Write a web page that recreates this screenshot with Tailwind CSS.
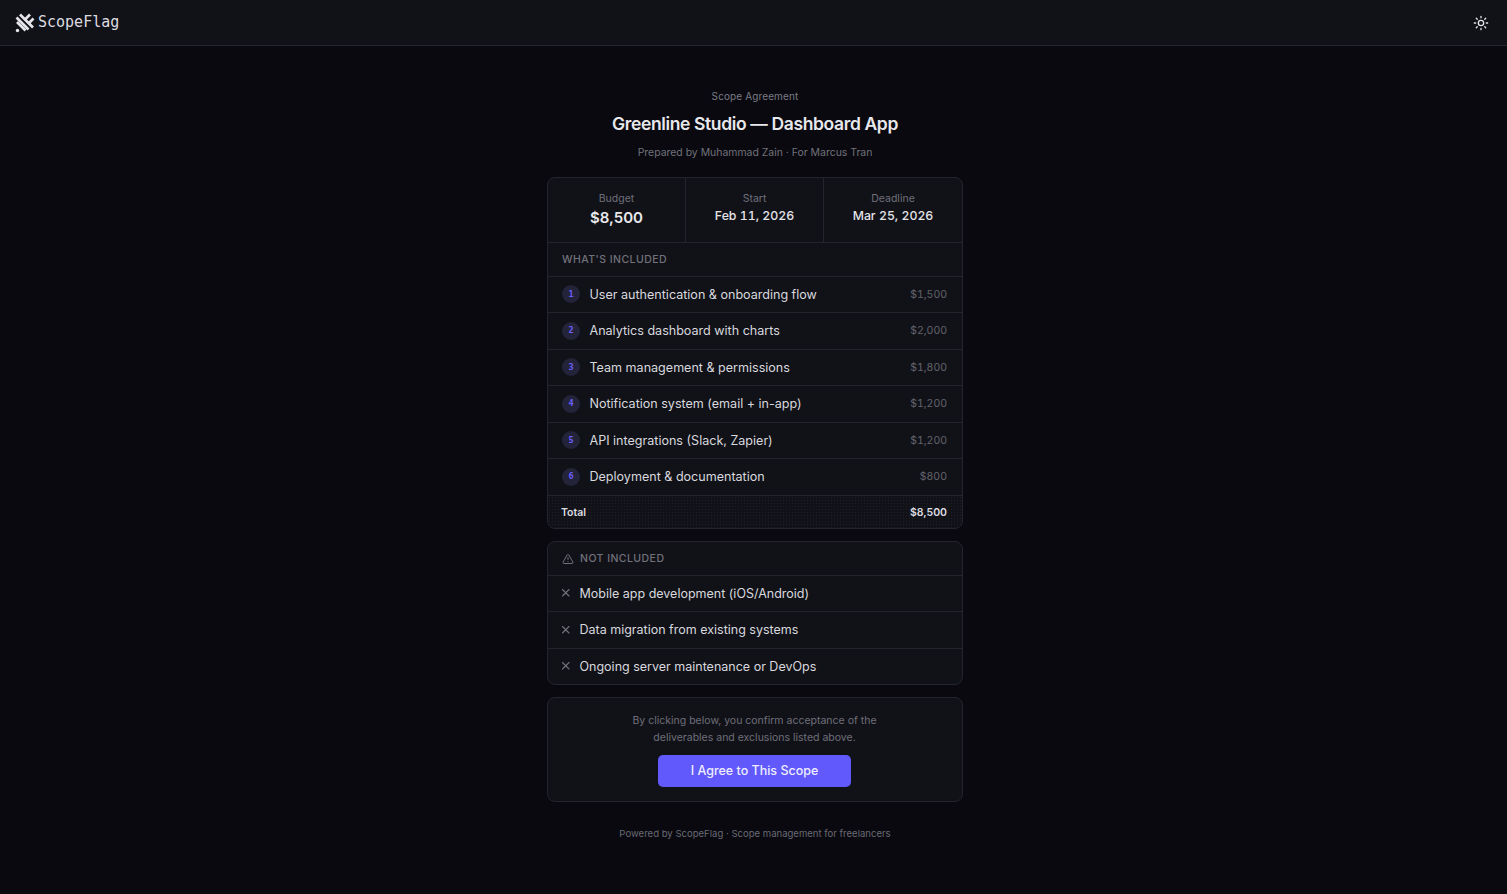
<!DOCTYPE html>
<html lang="en">
<head>
<meta charset="utf-8">
<title>ScopeFlag</title>
<script src="https://cdn.jsdelivr.net/npm/@tailwindcss/browser@4"></script>
</head>
<body class="min-h-[894px] bg-[#09090f] font-['Inter',sans-serif] text-[#e4e4e9]">
<header class="flex h-[46px] items-center justify-between border-b border-[#24252c] bg-[#111218] pl-[15px] pr-[18px]">
  <div class="flex items-center gap-[3px]">
    <svg class="h-[20px] w-[20px]" viewBox="0 0 20 20" fill="none" stroke="#e6e6ea" stroke-width="2.7"><path d="M1.5 4.5 13.5 16.5"/><path d="M5 1.5 18 14.5"/><path d="M2 9 10.5 17.5"/><path d="M9.5 7 15 1.5"/><path d="M13 11 18.5 5.5"/><circle cx="2.5" cy="17.5" r="1.7" fill="#e6e6ea" stroke="none"/></svg>
    <span class="font-['DejaVu_Sans_Mono',monospace] text-[15px] text-[#dcdce0]">ScopeFlag</span>
  </div>
  <svg class="h-4 w-4" viewBox="0 0 24 24" fill="none" stroke="#e4e4e9" stroke-width="2" stroke-linecap="round"><circle cx="12" cy="12" r="4"/><path d="M12 2v2M12 20v2M4.93 4.93l1.41 1.41M17.66 17.66l1.41 1.41M2 12h2M20 12h2M6.34 17.66l-1.41 1.41M19.07 4.93l-1.41 1.41"/></svg>
</header>
<main class="ml-[547px] w-[416px] pt-[44px]">
  <div class="text-center">
    <p class="text-[10px] leading-[12px] tracking-[0.12px] text-[#7b7b85]">Scope Agreement</p>
    <h1 class="mt-[8px] text-[17.5px] font-semibold leading-[28px] tracking-[-0.37px] text-[#e8e8ec]">Greenline Studio — Dashboard App</h1>
    <p class="mt-[7px] text-[10.45px] leading-[16px] text-[#71717b]">Prepared by Muhammad Zain · For Marcus Tran</p>
  </div>
  <section class="mt-[16px] overflow-hidden rounded-[8px] border border-[#24252c] bg-[#111218]">
    <div class="grid h-[65px] grid-cols-3 border-b border-[#24252c] text-center">
      <div class="border-r border-[#24252c] pt-[14px]"><p class="text-[10.5px] leading-[13px] text-[#6f6f79]">Budget</p><p class="mt-[2px] text-[15px] font-semibold leading-[22px] text-[#e8e8ec]">$8,500</p></div>
      <div class="border-r border-[#24252c] pt-[14px]"><p class="text-[10.5px] leading-[13px] text-[#6f6f79]">Start</p><p class="mt-[2px] text-[12.3px] font-medium tabular-nums leading-[18px] text-[#e4e4e9]">Feb 11, 2026</p></div>
      <div class="pt-[14px]"><p class="text-[10.5px] leading-[13px] text-[#6f6f79]">Deadline</p><p class="mt-[2px] text-[12.3px] font-medium tabular-nums leading-[18px] text-[#e4e4e9]">Mar 25, 2026</p></div>
    </div>
    <div class="flex h-[33.6px] items-center border-b border-[#24252c] px-[14px] pt-[2px] text-[10.5px] font-medium tracking-[0.45px] text-[#71717b]">WHAT'S INCLUDED</div>
    <ul>
      <li class="flex h-[36.5px] items-center border-b border-[#24252c] pl-[14px] pr-[15px]"><span class="flex h-[18px] w-[18px] items-center justify-center rounded-full bg-[#23233a] font-['DejaVu_Sans_Mono',monospace] text-[8.5px] font-semibold text-[#6c5ffa]">1</span><span class="ml-[9.5px] mt-[2px] text-[12.55px] text-[#d8d8de]">User authentication &amp; onboarding flow</span><span class="ml-auto mt-[1px] text-[10.5px] tabular-nums text-[#62626c]">$1,500</span></li>
      <li class="flex h-[36.5px] items-center border-b border-[#24252c] pl-[14px] pr-[15px]"><span class="flex h-[18px] w-[18px] items-center justify-center rounded-full bg-[#23233a] font-['DejaVu_Sans_Mono',monospace] text-[8.5px] font-semibold text-[#6c5ffa]">2</span><span class="ml-[9.5px] mt-[2px] text-[12.55px] text-[#d8d8de]">Analytics dashboard with charts</span><span class="ml-auto mt-[1px] text-[10.5px] tabular-nums text-[#62626c]">$2,000</span></li>
      <li class="flex h-[36.5px] items-center border-b border-[#24252c] pl-[14px] pr-[15px]"><span class="flex h-[18px] w-[18px] items-center justify-center rounded-full bg-[#23233a] font-['DejaVu_Sans_Mono',monospace] text-[8.5px] font-semibold text-[#6c5ffa]">3</span><span class="ml-[9.5px] mt-[2px] text-[12.55px] text-[#d8d8de]">Team management &amp; permissions</span><span class="ml-auto mt-[1px] text-[10.5px] tabular-nums text-[#62626c]">$1,800</span></li>
      <li class="flex h-[36.5px] items-center border-b border-[#24252c] pl-[14px] pr-[15px]"><span class="flex h-[18px] w-[18px] items-center justify-center rounded-full bg-[#23233a] font-['DejaVu_Sans_Mono',monospace] text-[8.5px] font-semibold text-[#6c5ffa]">4</span><span class="ml-[9.5px] mt-[2px] text-[12.55px] text-[#d8d8de]">Notification system (email + in-app)</span><span class="ml-auto mt-[1px] text-[10.5px] tabular-nums text-[#62626c]">$1,200</span></li>
      <li class="flex h-[36.5px] items-center border-b border-[#24252c] pl-[14px] pr-[15px]"><span class="flex h-[18px] w-[18px] items-center justify-center rounded-full bg-[#23233a] font-['DejaVu_Sans_Mono',monospace] text-[8.5px] font-semibold text-[#6c5ffa]">5</span><span class="ml-[9.5px] mt-[2px] text-[12.55px] text-[#d8d8de]">API integrations (Slack, Zapier)</span><span class="ml-auto mt-[1px] text-[10.5px] tabular-nums text-[#62626c]">$1,200</span></li>
      <li class="flex h-[36.5px] items-center border-b border-[#24252c] pl-[14px] pr-[15px]"><span class="flex h-[18px] w-[18px] items-center justify-center rounded-full bg-[#23233a] font-['DejaVu_Sans_Mono',monospace] text-[8.5px] font-semibold text-[#6c5ffa]">6</span><span class="ml-[9.5px] mt-[2px] text-[12.55px] text-[#d8d8de]">Deployment &amp; documentation</span><span class="ml-auto mt-[1px] text-[10.5px] tabular-nums text-[#62626c]">$800</span></li>
    </ul>
    <div class="flex h-[32px] items-center justify-between bg-[#111218] bg-[radial-gradient(#1f2027_0.7px,transparent_0.8px)] bg-[size:3px_3px] pl-[13px] pr-[15px] pt-[2px] text-[10.5px] font-semibold text-[#dcdce0]"><span>Total</span><span>$8,500</span></div>
  </section>
  <section class="mt-[12px] overflow-hidden rounded-[8px] border border-[#24252c] bg-[#111218]">
    <div class="flex h-[34px] items-center gap-[6px] border-b border-[#24252c] px-[14px] pt-[1px] text-[10.5px] font-medium tracking-[0.45px] text-[#71717b]">
      <svg class="h-[12px] w-[12px]" viewBox="0 0 24 24" fill="none" stroke="#71717b" stroke-width="2" stroke-linecap="round" stroke-linejoin="round"><path d="m21.73 18-8-14a2 2 0 0 0-3.48 0l-8 14A2 2 0 0 0 4 21h16a2 2 0 0 0 1.73-3"/><path d="M12 9v4"/><path d="M12 17h.01"/></svg>
      NOT INCLUDED
    </div>
    <ul>
      <li class="flex h-[36.5px] items-center gap-[8.5px] border-b border-[#24252c] px-[13px]"><svg class="h-[10px] w-[10px]" viewBox="0 0 10 10" fill="none" stroke="#71717b" stroke-width="1.1" stroke-linecap="round"><path d="M8 1.5 1.5 8M1.5 1.5 8 8"/></svg><span class="mt-[2px] text-[12.5px] text-[#d8d8de]">Mobile app development (iOS/Android)</span></li>
      <li class="flex h-[36.5px] items-center gap-[8.5px] border-b border-[#24252c] px-[13px]"><svg class="h-[10px] w-[10px]" viewBox="0 0 10 10" fill="none" stroke="#71717b" stroke-width="1.1" stroke-linecap="round"><path d="M8 1.5 1.5 8M1.5 1.5 8 8"/></svg><span class="mt-[2px] text-[12.5px] text-[#d8d8de]">Data migration from existing systems</span></li>
      <li class="flex h-[35.5px] items-center gap-[8.5px] px-[13px]"><svg class="h-[10px] w-[10px]" viewBox="0 0 10 10" fill="none" stroke="#71717b" stroke-width="1.1" stroke-linecap="round"><path d="M8 1.5 1.5 8M1.5 1.5 8 8"/></svg><span class="mt-[2px] text-[12.5px] text-[#d8d8de]">Ongoing server maintenance or DevOps</span></li>
    </ul>
  </section>
  <section class="mt-[12px] flex h-[105px] flex-col items-center rounded-[8px] border border-[#24252c] bg-[#111218] pt-[14px]">
    <p class="mr-[1px] text-center text-[10.5px] leading-[17px] text-[#6f6f79]">By clicking below, you confirm acceptance of the<br>deliverables and exclusions listed above.</p>
    <button class="mr-[1px] mt-[9px] h-[32px] w-[193px] rounded-[5px] bg-[#6159fb] text-[12.5px] font-medium text-[#eeeeff]">I Agree to This Scope</button>
  </section>
  <p class="mt-[25px] text-center text-[9.55px] leading-[14px] text-[#6a6a74]">Powered by ScopeFlag · Scope management for freelancers</p>
</main>
</body>
</html>
